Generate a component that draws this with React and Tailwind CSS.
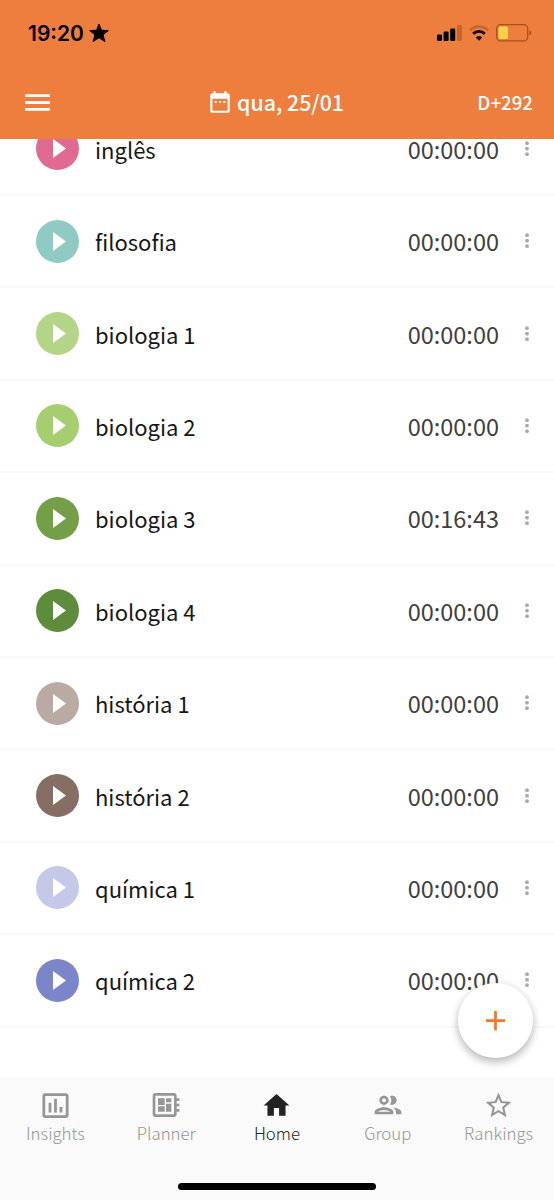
import { MdAdd, MdDateRange, MdHome, MdInsertChartOutlined, MdMenu, MdOutlineDeveloperBoard, MdOutlineGroup, MdStarBorder } from 'react-icons/md'

const SUBJECTS = [
  { name: 'inglês', time: '00:00:00', color: 'bg-[#e06a92]' },
  { name: 'filosofia', time: '00:00:00', color: 'bg-[#90cbc3]' },
  { name: 'biologia 1', time: '00:00:00', color: 'bg-[#b3d588]' },
  { name: 'biologia 2', time: '00:00:00', color: 'bg-[#a4ce70]' },
  { name: 'biologia 3', time: '00:16:43', color: 'bg-[#729f48]' },
  { name: 'biologia 4', time: '00:00:00', color: 'bg-[#5d8c3a]' },
  { name: 'história 1', time: '00:00:00', color: 'bg-[#b9aaa4]' },
  { name: 'história 2', time: '00:00:00', color: 'bg-[#876e64]' },
  { name: 'química 1', time: '00:00:00', color: 'bg-[#c5c9e7]' },
  { name: 'química 2', time: '00:00:00', color: 'bg-[#7a86c8]' },
]

const TABS = [
  { label: 'Insights', Icon: MdInsertChartOutlined, size: 33 },
  { label: 'Planner', Icon: MdOutlineDeveloperBoard, size: 32 },
  { label: 'Home', Icon: MdHome, size: 31, active: true },
  { label: 'Group', Icon: MdOutlineGroup, size: 32 },
  { label: 'Rankings', Icon: MdStarBorder, size: 31 },
]

function StatusBar() {
  return (
    <div className="flex h-[66px] items-center justify-between pl-7 pr-[22px] text-black">
      <div className="flex items-center gap-[5px] font-['Inter',sans-serif] text-[21px] font-semibold">
        19:20
        <svg width="20" height="20" viewBox="0 0 20 20" fill="currentColor" stroke="currentColor" strokeLinejoin="round">
          <path d="M10 1l2.4 6.2 6.9.4-5.3 4.2 1.9 6.7-5.9-3.7-5.9 3.7L6 11.8.7 7.6l6.9-.4z" />
        </svg>
      </div>
      <div className="flex items-center gap-[7px]">
        <svg width="25" height="16" viewBox="0 0 25 16">
          <rect x="0" y="9.5" width="5" height="6.5" rx="1.2" />
          <rect x="6.6" y="6.5" width="5" height="9.5" rx="1.2" />
          <rect x="13.2" y="3.5" width="5" height="12.5" rx="1.2" />
          <rect x="20" y="0" width="5" height="16" rx="1.2" fill="#c5652f" />
        </svg>
        <svg width="20" height="16" viewBox="0 0 20 16" fill="none">
          <path d="M1 5.2a13 13 0 0 1 18 0" stroke="#c5652f" strokeWidth="2.8" />
          <path d="M4.2 8.7a8.3 8.3 0 0 1 11.6 0" stroke="#000" strokeWidth="2.8" />
          <path d="M10 15.8l-3.2-3.2a4.6 4.6 0 0 1 6.4 0z" fill="#000" />
        </svg>
        <svg width="36" height="18" viewBox="0 0 36 18">
          <rect x=".7" y=".7" width="31" height="16.2" rx="4" fill="none" stroke="#a4511f" strokeWidth="1.3" />
          <rect x="2.5" y="2.6" width="9.5" height="12.4" rx="1.8" fill="#f3d546" />
          <path d="M33.3 6.3q2 .6 2 2.6t-2 2.6z" fill="#a4511f" />
        </svg>
      </div>
    </div>
  )
}

function SubjectRow({ name, time, color }) {
  return (
    <li className="flex h-[92.4px] items-center border-b-2 border-[#f9f9f9] pl-9 pr-6">
      <button className={`flex size-[43px] items-center justify-center rounded-full ${color}`}>
        <svg width="13" height="19" viewBox="0 0 13 19" fill="#fff" className="ml-[3px]">
          <path d="M0 0l13 9.5L0 19z" />
        </svg>
      </button>
      <span className="ml-4 flex-1 text-[22px] text-[#161616]">{name}</span>
      <span className="mr-px pt-[1.5px] text-[23.5px] text-[#404040]">{time}</span>
      <svg width="6" height="16" viewBox="0 0 6 16" fill="#a9a9a9" className="ml-6">
        <circle cx="3" cy="2.2" r="1.9" />
        <circle cx="3" cy="7.7" r="1.9" />
        <circle cx="3" cy="13.2" r="1.9" />
      </svg>
    </li>
  )
}

export default function App() {
  return (
    <div className="relative flex h-[1200px] w-[554px] flex-col overflow-hidden bg-white font-['Noto_Sans_CJK_KR',sans-serif] leading-none">
      <header className="h-[139px] shrink-0 bg-[#ee7e3e] text-white">
        <StatusBar />
        <div className="grid h-[72px] grid-cols-3 items-center pl-[21px] pr-[21px]">
          <MdMenu size={33} />
          <div className="flex items-center justify-center gap-1 whitespace-nowrap pr-[3px] text-[21.3px] font-medium">
            <MdDateRange size={26} />
            <span>qua, 25/01</span>
          </div>
          <span className="text-right text-[18.7px] font-medium">D+292</span>
        </div>
      </header>

      {/* list is scrolled a little, so the first row slides under the header */}
      <main className="min-h-0 flex-1 overflow-hidden">
        <ul className="-mt-[35.4px]">
          {SUBJECTS.map(s => <SubjectRow key={s.name} {...s} />)}
        </ul>
      </main>

      <nav className="h-[123px] shrink-0 bg-[#fafafa]">
        <div className="grid grid-cols-5">
          {TABS.map(({ label, Icon, size, active }) => (
            <div key={label} className={`flex flex-col items-center pt-3 ${active ? 'text-[#222]' : 'text-[#969696]'}`}>
              <span className="flex h-8 items-center"><Icon size={size} /></span>
              <span className="mt-1 text-[16.8px] font-light">{label}</span>
            </div>
          ))}
        </div>
        <div className="mx-auto mt-[41px] h-[7px] w-[198px] rounded-full bg-black" />
      </nav>

      <button className="absolute right-[21px] top-[983px] flex size-[75px] items-center justify-center rounded-full bg-white pr-px text-[#ee7838] shadow-[0_5px_8px_rgba(0,0,0,0.2),0_1px_10px_rgba(0,0,0,0.12)]">
        <MdAdd size={33} />
      </button>
    </div>
  )
}
